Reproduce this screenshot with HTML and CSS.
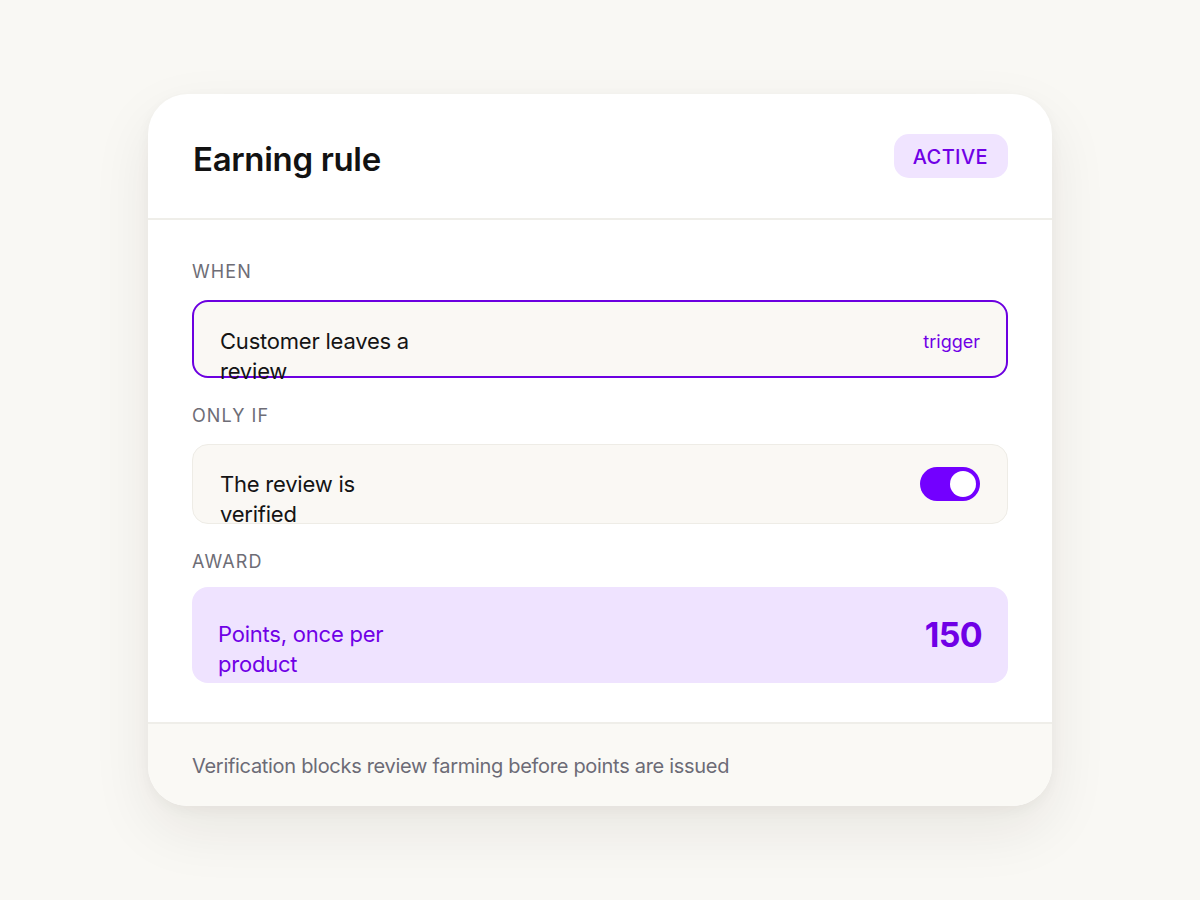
FILE: index.html
```html
<!DOCTYPE html>
<html lang="en">
<head>
<meta charset="utf-8">
<title>Earning rule</title>
<link rel="stylesheet" href="styles.css">
</head>
<body>
<main class="card">
  <header class="card-head">
    <h1 class="title">Earning rule</h1>
    <span class="badge">ACTIVE</span>
  </header>
  <section class="card-body">
    <div class="group">
      <div class="label">WHEN</div>
      <div class="row row-trigger">
        <div class="row-text">Customer leaves a review</div>
        <div class="row-tag">trigger</div>
      </div>
    </div>
    <div class="group">
      <div class="label">ONLY IF</div>
      <div class="row row-cond">
        <div class="row-text">The review is verified</div>
        <div class="toggle"><span class="knob"></span></div>
      </div>
    </div>
    <div class="group group-award">
      <div class="label">AWARD</div>
      <div class="row row-award">
        <div class="row-text">Points, once per product</div>
        <div class="points">150</div>
      </div>
    </div>
  </section>
  <footer class="card-foot">Verification blocks review farming before points are issued</footer>
</main>
</body>
</html>
```

FILE: styles.css
```css
* { box-sizing: border-box; }
html, body { margin: 0; padding: 0; }
body {
  background: #f9f8f4;
  font-family: Inter, "Noto Sans", "Liberation Sans", sans-serif;
  min-height: 100vh;
  display: flex;
  align-items: center;
  justify-content: center;
  color: #141414;
}
.card {
  width: 904px;
  background: #ffffff;
  border-radius: 40px;
  box-shadow: 0 24px 60px rgba(40, 30, 10, 0.08), 0 4px 14px rgba(40, 30, 10, 0.04);
  overflow: hidden;
}
.card-head {
  display: flex;
  align-items: center;
  justify-content: space-between;
  padding: 40px 44px 40px 45px;
  border-bottom: 2px solid #efeee9;
}
.title {
  margin: 0;
  padding-top: 6px;
  font-size: 33px;
  font-weight: 600;
  letter-spacing: -0.01em;
  color: #121212;
  line-height: 38px;
}
.badge {
  display: inline-flex;
  align-items: center;
  height: 44px;
  padding: 2px 20px 0 19px;
  border-radius: 15px;
  background: #f0e4ff;
  color: #7000e6;
  font-size: 20px;
  font-weight: 500;
  letter-spacing: 0.02em;
}
.card-body {
  padding: 40px 44px 39px 44px;
  display: flex;
  flex-direction: column;
  gap: 26px;
}
.group {
  display: flex;
  flex-direction: column;
  gap: 16px;
}
.group-award { gap: 13px; }
.label {
  font-size: 18px;
  line-height: 24px;
  font-weight: 400;
  letter-spacing: 0.06em;
  color: #6e6d76;
}
.row {
  display: flex;
  align-items: center;
  justify-content: space-between;
  border-radius: 16px;
  background: #faf8f4;
}
.row-text {
  width: 200px;
  height: 30px;
  font-size: 22px;
  line-height: 30px;
  letter-spacing: -0.01em;
}
.row-trigger {
  border: 2px solid #6c00e0;
  padding: 24px 26px 20px 26px;
}
.row-tag {
  font-size: 18px;
  font-weight: 400;
  color: #7000e6;
}
.row-cond {
  border: 1px solid #eeece6;
  padding: 22px 27px;
}
.toggle {
  width: 60px;
  height: 34px;
  border-radius: 17px;
  background: #7300ff;
  display: flex;
  align-items: center;
  justify-content: flex-end;
  padding: 0 4px;
}
.knob {
  width: 26px;
  height: 26px;
  border-radius: 50%;
  background: #ffffff;
}
.row-award {
  background: #efe3ff;
  padding: 26px 26px;
}
.row-award .row-text {
  color: #7000e6;
  height: 44px;
  padding-top: 6px;
}
.points {
  font-size: 34px;
  line-height: 44px;
  font-weight: 700;
  letter-spacing: -0.02em;
  color: #7000e6;
}
.card-foot {
  background: #faf9f5;
  border-top: 2px solid #efeee9;
  padding: 30px 44px 28px 44px;
  font-size: 20px;
  line-height: 24px;
  letter-spacing: -0.015em;
  color: #6c6b76;
}
```
